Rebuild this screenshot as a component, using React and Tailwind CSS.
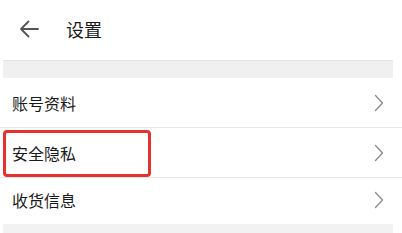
import React from "react";

function Chevron() {
  return (
    <svg width="10" height="18" viewBox="0 0 10 18" className="shrink-0">
      <path d="M1.5 1.5 L8.5 9 L1.5 16.5" fill="none" stroke="#8a8a8a" strokeWidth="1.3" strokeLinecap="round" strokeLinejoin="round" />
    </svg>
  );
}

function Row({ label, boxed, last }) {
  return (
    <div className={`relative ${last ? "h-[46px] pb-[2px]" : "h-[50px] border-b border-[#e8e8e8]"} flex items-center justify-between pl-[12px] pr-[18px]`}>
      <span className="text-[16px] text-[#1a1a1a]">{label}</span>
      <Chevron />
      {boxed && (
        <div className="absolute left-[3px] top-[2px] w-[148px] h-[47px] border-[3px] border-[#e8302c] rounded-[4px]" />
      )}
    </div>
  );
}

export default function App() {
  return (
    <div className="w-[402px] h-[233px] bg-white overflow-hidden" style={{ fontFamily: '"Noto Sans CJK SC", "Noto Sans", sans-serif' }}>
      <div className="h-[60px] flex items-center pb-[2px]">
        <svg width="20" height="18" viewBox="0 0 20 18" className="ml-[19px]">
          <path d="M19 9 H2 M9.5 1.5 L2 9 L9.5 16.5" fill="none" stroke="#555" strokeWidth="1.8" strokeLinecap="round" strokeLinejoin="round" />
        </svg>
        <span className="ml-[27px] text-[18px] text-[#1a1a1a]">设置</span>
      </div>
      <div className="h-[18px] ml-[3px] mr-[9px] bg-[#f0f0f0] border-t border-[#e4e4e4]" />
      <Row label="账号资料" />
      <Row label="安全隐私" boxed />
      <Row label="收货信息" last />
      <div className="h-[12px] ml-[3px] mr-[9px] bg-[#f2f2f2]" />
    </div>
  );
}
